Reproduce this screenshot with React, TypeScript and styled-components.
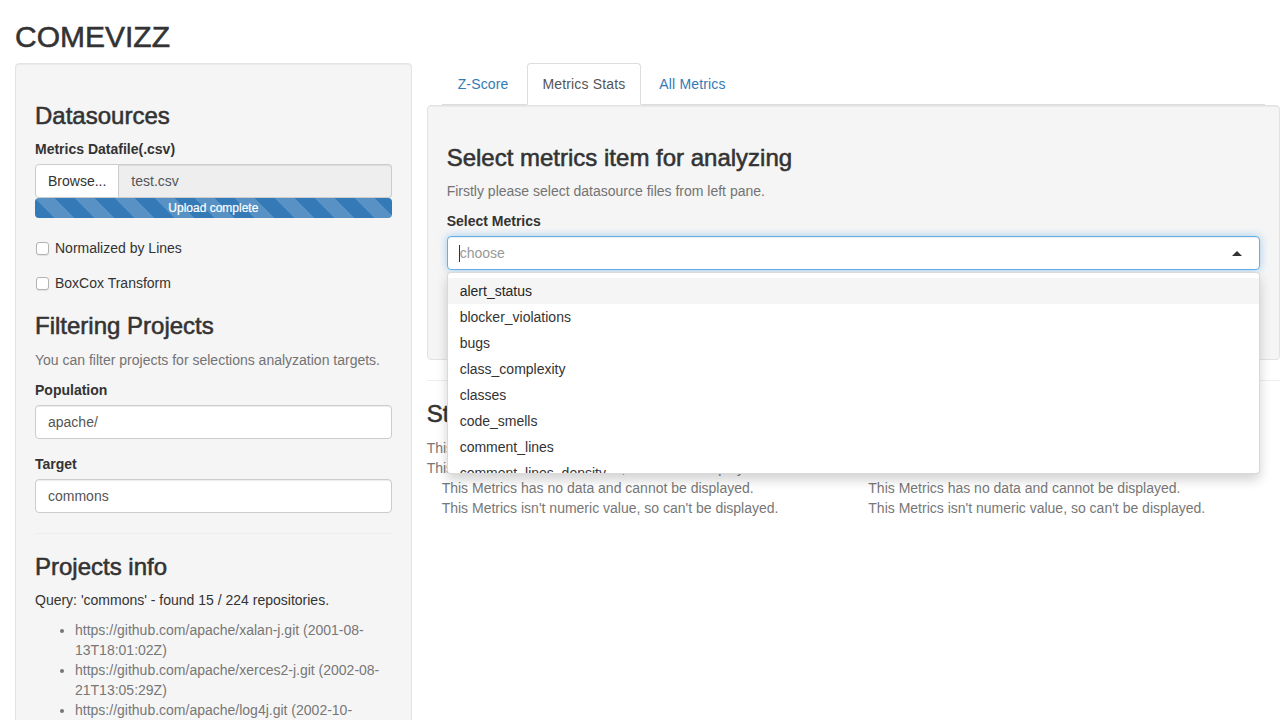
import React from "react";
import styled, { createGlobalStyle, css } from "styled-components";

const GlobalStyle = createGlobalStyle`
  *, *::before, *::after { box-sizing: border-box; }
  html, body { overflow: hidden; }
  body {
    margin: 0;
    background: #fff;
    color: #333;
    font-family: "Liberation Sans", Arial, Helvetica, sans-serif;
    font-size: 14px;
    line-height: 1.42857143;
  }
`;

const heading = css`
  font-weight: 400;
  line-height: 1.1;
  color: #333;
  -webkit-text-stroke: 0.55px currentColor;
`;

const Page = styled.div`
  padding: 0 15px;
`;

const AppTitle = styled.h2`
  ${heading};
  font-size: 30px;
  margin: 20px 0 10px;
`;

const Row = styled.div`
  display: flex;
  margin: 0 -15px;
`;

const Sidebar = styled.div`
  width: 33.333333%;
  padding: 0 15px;
`;

const Main = styled.div`
  width: 66.666667%;
  padding: 0 15px;
`;

const Well = styled.div`
  background: #f5f5f5;
  border: 1px solid #e3e3e3;
  border-radius: 4px;
  padding: 19px;
  margin-bottom: 20px;
  box-shadow: inset 0 1px 1px rgba(0, 0, 0, 0.05);
`;

const SectionTitle = styled.h3`
  ${heading};
  font-size: 24px;
  margin: 20px 0 10px;
`;

const FieldLabel = styled.label`
  display: inline-block;
  font-weight: 700;
  margin-bottom: 5px;
`;

const FormGroup = styled.div`
  margin-bottom: 15px;
  &:last-child { margin-bottom: 0; }
`;

const HelpText = styled.p<{ $dark?: boolean }>`
  margin: 0 0 10px;
  color: ${(p) => (p.$dark ? "#333" : "#737373")};
`;

const InputGroup = styled.div`
  display: flex;
  height: 34px;
`;

const BrowseButton = styled.span`
  padding: 6px 12px;
  background: #fff;
  color: #333;
  border: 1px solid #ccc;
  border-radius: 4px 0 0 4px;
  white-space: nowrap;
`;

const FileName = styled.div`
  flex: 1;
  padding: 6px 12px;
  background: #eee;
  color: #555;
  border: 1px solid #ccc;
  border-left: 0;
  border-radius: 0 4px 4px 0;
  box-shadow: inset 0 1px 1px rgba(0, 0, 0, 0.075);
`;

const Progress = styled.div`
  height: 20px;
  margin: 0 0 20px;
  border-radius: 4px;
  overflow: hidden;
  background-color: #337ab7;
  background-image: linear-gradient(
    45deg,
    rgba(255, 255, 255, 0.18) 25%,
    transparent 25%,
    transparent 50%,
    rgba(255, 255, 255, 0.18) 50%,
    rgba(255, 255, 255, 0.18) 75%,
    transparent 75%,
    transparent
  );
  background-size: 40px 40px;
  color: #fff;
  font-size: 12px;
  line-height: 20px;
  text-align: center;
  -webkit-text-stroke: 0.2px currentColor;
`;

const CheckRow = styled.label`
  display: flex;
  align-items: center;
  margin: 10px 0;
  min-height: 20px;
  line-height: 20px;
`;

const CheckBox = styled.span`
  width: 13px;
  height: 13px;
  margin: 0 6px 0 1px;
  border: 1px solid #b3b3b3;
  border-radius: 3px;
  background: #fff;
  box-shadow: 0 1px 1px rgba(0, 0, 0, 0.08);
`;

const TextBox = styled.div`
  height: 34px;
  padding: 6px 12px;
  background: #fff;
  color: #555;
  border: 1px solid #ccc;
  border-radius: 4px;
  box-shadow: inset 0 1px 1px rgba(0, 0, 0, 0.075);
`;

const Divider = styled.hr`
  border: 0;
  border-top: 1px solid #eee;
  margin: 20px 0;
`;

const ProjectList = styled.ul`
  margin: 0 0 10px;
  padding-left: 40px;
  color: #777;
`;

const NavTabs = styled.ul`
  display: flex;
  margin: 0;
  padding: 0;
  list-style: none;
  border-bottom: 1px solid #ddd;
`;

const Tab = styled.li<{ $active?: boolean }>`
  margin: 0 2px -1px 0;
  padding: 10px 15px;
  border: 1px solid transparent;
  border-radius: 4px 4px 0 0;
  color: #337ab7;
  letter-spacing: 0.15px;
  ${(p) =>
    p.$active &&
    css`
      color: #555;
      background: #fff;
      border-color: #ddd #ddd transparent;
    `}
`;

const TabContent = styled.div`
  margin: 0 -15px;
`;

const SelectWrap = styled.div`
  position: relative;
`;

const SelectControl = styled.div`
  display: flex;
  align-items: center;
  height: 34px;
  padding: 6px 12px;
  background: #fff;
  border: 1px solid #66afe9;
  border-radius: 4px;
  box-shadow: inset 0 1px 1px rgba(0, 0, 0, 0.075), 0 0 8px rgba(102, 175, 233, 0.6);
`;

const Cursor = styled.span`
  width: 1px;
  height: 17px;
  margin-left: -1px;
  background: #333;
`;

const Placeholder = styled.span`
  color: #999;
`;

const Arrow = styled.span`
  margin-left: auto;
  margin-right: 5px;
  border-style: solid;
  border-width: 0 5px 5px;
  border-color: transparent transparent #333;
`;

const Dropdown = styled.div`
  position: absolute;
  z-index: 10;
  top: 100%;
  left: 0;
  right: 0;
  margin-top: 2px;
  background: #fff;
  border: 1px solid rgba(0, 0, 0, 0.15);
  border-radius: 4px;
  box-shadow: 0 6px 12px rgba(0, 0, 0, 0.175);
`;

const DropdownList = styled.div`
  max-height: 200px;
  padding: 5px 0;
  overflow: hidden;
`;

const Option = styled.div<{ $active?: boolean }>`
  padding: 3px 12px;
  line-height: 20px;
  color: ${(p) => (p.$active ? "#262626" : "#333")};
  background: ${(p) => (p.$active ? "#f5f5f5" : "transparent")};
`;

const HiddenOptions = styled.div`
  height: 55px;
`;

const Notice = styled.div`
  color: #777;
`;

const Columns = styled.div`
  display: grid;
  grid-template-columns: 1fr 1fr;
`;

const Column = styled.div`
  padding: 0 15px;
`;

const projects = [
  "https://github.com/apache/xalan-j.git (2001-08-13T18:01:02Z)",
  "https://github.com/apache/xerces2-j.git (2002-08-21T13:05:29Z)",
  "https://github.com/apache/log4j.git (2002-10-08T16:11:23Z)",
  "https://github.com/apache/commons-lang.git (2002-07-19T03:35:42Z)",
];

const metrics = [
  "alert_status",
  "blocker_violations",
  "bugs",
  "class_complexity",
  "classes",
  "code_smells",
  "comment_lines",
  "comment_lines_density",
  "complexity",
];

const NO_DATA = "This Metrics has no data and cannot be displayed.";
const NOT_NUMERIC = "This Metrics isn't numeric value, so can't be displayed.";

export default function App() {
  return (
    <Page>
      <GlobalStyle />
      <AppTitle>COMEVIZZ</AppTitle>
      <Row>
        <Sidebar>
          <Well>
            <SectionTitle>Datasources</SectionTitle>
            <FormGroup>
              <FieldLabel>Metrics Datafile(.csv)</FieldLabel>
              <InputGroup>
                <BrowseButton>Browse...</BrowseButton>
                <FileName>test.csv</FileName>
              </InputGroup>
              <Progress>Upload complete</Progress>
            </FormGroup>
            <FormGroup>
              <CheckRow>
                <CheckBox />
                Normalized by Lines
              </CheckRow>
            </FormGroup>
            <FormGroup>
              <CheckRow>
                <CheckBox />
                BoxCox Transform
              </CheckRow>
            </FormGroup>

            <SectionTitle>Filtering Projects</SectionTitle>
            <HelpText>You can filter projects for selections analyzation targets.</HelpText>
            <FormGroup>
              <FieldLabel>Population</FieldLabel>
              <TextBox>apache/</TextBox>
            </FormGroup>
            <FormGroup style={{ marginBottom: 15 }}>
              <FieldLabel>Target</FieldLabel>
              <TextBox>commons</TextBox>
            </FormGroup>
            <Divider />

            <SectionTitle>Projects info</SectionTitle>
            <HelpText $dark>Query: 'commons' - found 15 / 224 repositories.</HelpText>
            <ProjectList>
              {projects.map((p) => (
                <li key={p}>{p}</li>
              ))}
            </ProjectList>
          </Well>
        </Sidebar>

        <Main>
          <NavTabs>
            <Tab>Z-Score</Tab>
            <Tab $active>Metrics Stats</Tab>
            <Tab>All Metrics</Tab>
          </NavTabs>
          <TabContent>
            <Well>
              <SectionTitle>Select metrics item for analyzing</SectionTitle>
              <HelpText>Firstly please select datasource files from left pane.</HelpText>
              <FormGroup style={{ marginBottom: 15 }}>
                <FieldLabel>Select Metrics</FieldLabel>
                <SelectWrap>
                  <SelectControl>
                    <Cursor />
                    <Placeholder>choose</Placeholder>
                    <Arrow />
                  </SelectControl>
                  <Dropdown>
                    <DropdownList>
                      {metrics.map((m, i) => (
                        <Option key={m} $active={i === 0}>
                          {m}
                        </Option>
                      ))}
                    </DropdownList>
                  </Dropdown>
                </SelectWrap>
              </FormGroup>
              <HiddenOptions />
            </Well>
            <Divider />
            <SectionTitle>Statistics</SectionTitle>
            <Notice>{NO_DATA}</Notice>
            <Notice>{NOT_NUMERIC}</Notice>
            <Columns>
              <Column>
                <Notice>{NO_DATA}</Notice>
                <Notice>{NOT_NUMERIC}</Notice>
              </Column>
              <Column>
                <Notice>{NO_DATA}</Notice>
                <Notice>{NOT_NUMERIC}</Notice>
              </Column>
            </Columns>
          </TabContent>
        </Main>
      </Row>
    </Page>
  );
}
